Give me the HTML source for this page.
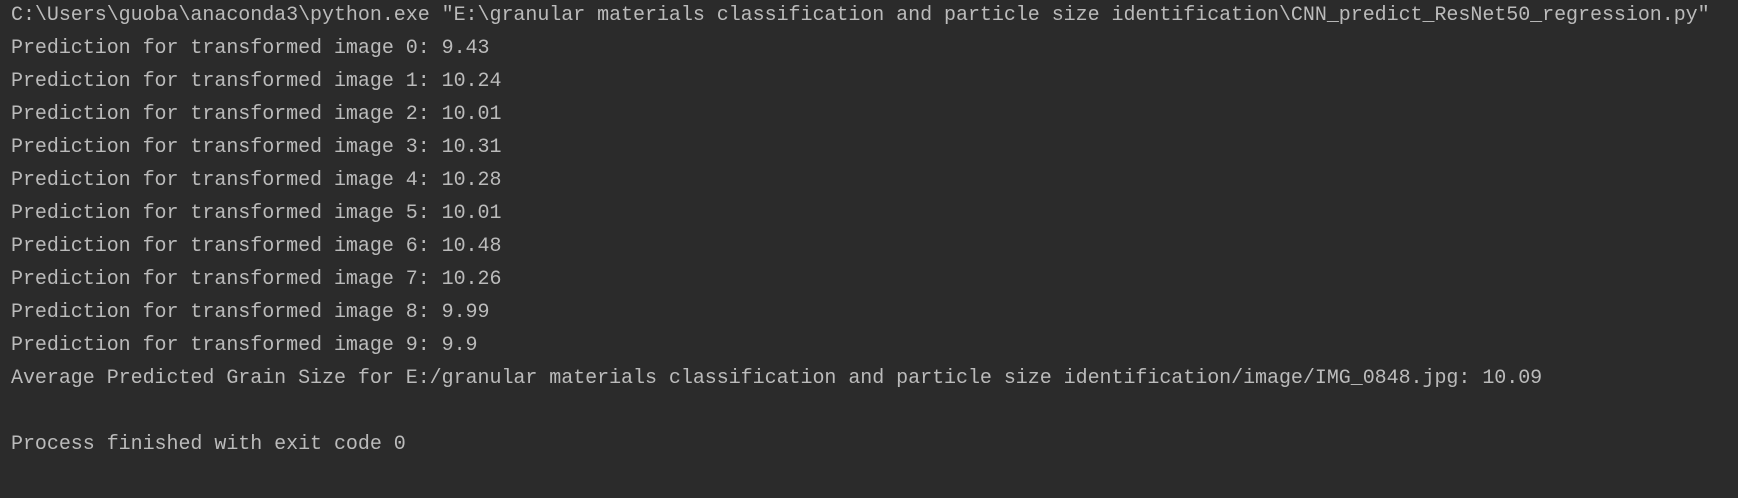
<!DOCTYPE html>
<html><head><meta charset="utf-8"><style>
html,body{margin:0;padding:0;background:#2b2b2b;width:1738px;height:498px;overflow:hidden}
pre{margin:0;padding:-1px 0 0 11px;position:absolute;left:11px;top:-1px;font-family:"Liberation Mono",monospace;font-size:20px;line-height:33px;color:#bbbbbb;letter-spacing:-0.04px}
</style></head><body><pre>C:\Users\guoba\anaconda3\python.exe "E:\granular materials classification and particle size identification\CNN_predict_ResNet50_regression.py"
Prediction for transformed image 0: 9.43
Prediction for transformed image 1: 10.24
Prediction for transformed image 2: 10.01
Prediction for transformed image 3: 10.31
Prediction for transformed image 4: 10.28
Prediction for transformed image 5: 10.01
Prediction for transformed image 6: 10.48
Prediction for transformed image 7: 10.26
Prediction for transformed image 8: 9.99
Prediction for transformed image 9: 9.9
Average Predicted Grain Size for E:/granular materials classification and particle size identification/image/IMG_0848.jpg: 10.09

Process finished with exit code 0
</pre></body></html>
